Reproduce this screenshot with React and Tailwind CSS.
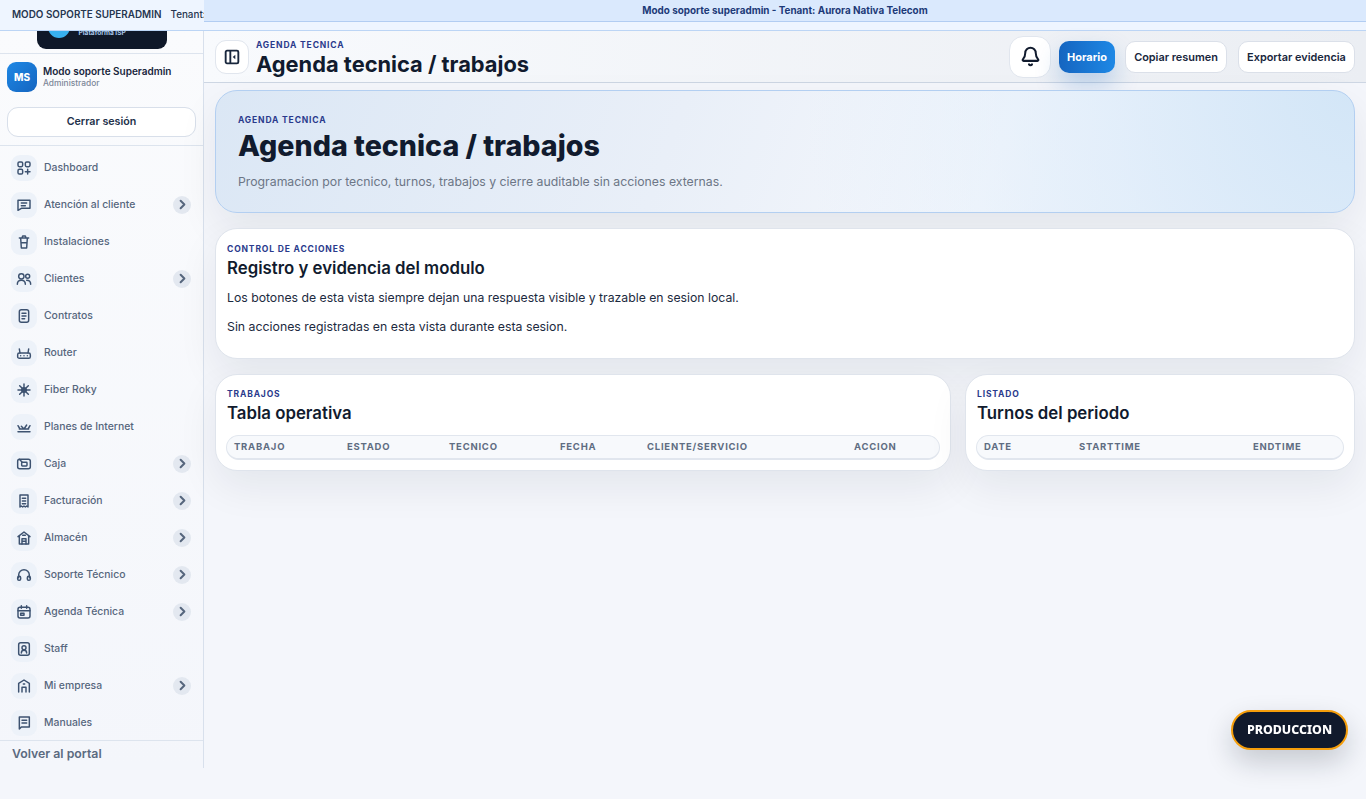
import { Bell, ChevronRight } from "lucide-react";

const Svg = ({ children }) => (
  <svg width="16" height="16" viewBox="0 0 24 24" fill="none" stroke="#3d5270" strokeWidth="2.2" strokeLinecap="round" strokeLinejoin="round">
    {children}
  </svg>
);

const icons = {
  dashboard: (
    <Svg>
      <rect x="3" y="3" width="7" height="7" rx="2" />
      <rect x="14" y="3" width="7" height="7" rx="2" />
      <rect x="3" y="14" width="7" height="7" rx="2" />
      <path d="M17.5 14v7M14 17.5h7" />
    </Svg>
  ),
  chat: (
    <Svg>
      <path d="M3 5h18v12H8l-5 3z" />
      <path d="M8 9h8M8 13h6" />
    </Svg>
  ),
  trash: (
    <Svg>
      <path d="M5 6h14M9 6l1-3h4l1 3M7 6l1 15h8l1-15M7.500 13h9" />
    </Svg>
  ),
  users: (
    <Svg>
      <circle cx="8" cy="8" r="4" />
      <circle cx="17.500" cy="8" r="3" />
      <path d="M2 20c0-4 2.500-6 6-6s6 2 6 6M16 14c3.500 0 6 2 6 6" />
    </Svg>
  ),
  contract: (
    <Svg>
      <rect x="5" y="2.500" width="14" height="19" rx="3" />
      <path d="M9 8h6M9 12h6M9 16h4" />
    </Svg>
  ),
  router: (
    <Svg>
      <rect x="2.500" y="12" width="19" height="8" rx="2.500" />
      <path d="M6 12 5 6M18 12l1-6M7 16h.01M12 16h.01M17 16h.01" />
    </Svg>
  ),
  fiber: (
    <Svg>
      <circle cx="12" cy="12" r="3.500" fill="#3d5270" />
      <path d="M12 3v5M12 16v5M3 12h5M16 12h5M5.500 5.500 9 9M15 15l3.500 3.500M18.500 5.500 15 9M9 15l-3.500 3.500" />
    </Svg>
  ),
  plans: (
    <Svg>
      <path d="M3 19h18M5 15h14M6 15 3 10M18 15l3-5M8 11l4 4 4-6" />
    </Svg>
  ),
  box: (
    <Svg>
      <rect x="2.500" y="5" width="19" height="14" rx="3" />
      <rect x="8.500" y="9.500" width="8" height="5.500" rx="1" />
      <path d="m5 5 4 4" />
    </Svg>
  ),
  bill: (
    <Svg>
      <path d="M6 3h12v18l-2-1.500-2 1.500-2-1.500-2 1.500-2-1.500L6 21z" />
      <path d="M9.500 8h5M9.500 12h5M9.500 16h5" />
    </Svg>
  ),
  warehouse: (
    <Svg>
      <path d="M3 10 12 3l9 7M5 9v12h14V9" />
      <path d="M9 21v-8h6v8M9 17h6M10 8h4" />
    </Svg>
  ),
  headset: (
    <Svg>
      <path d="M4 16v-4a8 8 0 0 1 16 0v4" />
      <rect x="2.500" y="14" width="4.500" height="6" rx="2" />
      <rect x="17" y="14" width="4.500" height="6" rx="2" />
    </Svg>
  ),
  calendar: (
    <Svg>
      <rect x="3" y="5" width="18" height="16" rx="3" />
      <path d="M8 2.500v4M16 2.500v4M3 10h18M7 14h5v3H7z" />
    </Svg>
  ),
  staff: (
    <Svg>
      <rect x="4" y="2.500" width="16" height="19" rx="3" />
      <circle cx="12" cy="10" r="3" />
      <path d="M8 18c0-3 1.500-4 4-4s4 1 4 4" />
    </Svg>
  ),
  company: (
    <Svg>
      <path d="M4 21V8l8-5 8 5v13" />
      <path d="M9 21v-7h6v7M11 9h2" />
    </Svg>
  ),
  manual: (
    <Svg>
      <path d="M5 21V3h15v15H8l-3 3" />
      <path d="M9 8h7M9 12h7" />
    </Svg>
  ),
};

const navItems = [
  { label: "Dashboard", icon: "dashboard" },
  { label: "Atención al cliente", icon: "chat", more: true },
  { label: "Instalaciones", icon: "trash" },
  { label: "Clientes", icon: "users", more: true },
  { label: "Contratos", icon: "contract" },
  { label: "Router", icon: "router" },
  { label: "Fiber Roky", icon: "fiber" },
  { label: "Planes de Internet", icon: "plans" },
  { label: "Caja", icon: "box", more: true },
  { label: "Facturación", icon: "bill", more: true },
  { label: "Almacén", icon: "warehouse", more: true },
  { label: "Soporte Técnico", icon: "headset", more: true },
  { label: "Agenda Técnica", icon: "calendar", more: true },
  { label: "Staff", icon: "staff" },
  { label: "Mi empresa", icon: "company", more: true },
  { label: "Manuales", icon: "manual" },
];

const NavRow = ({ label, icon, more }) => (
  <div className="flex h-[37px] shrink-0 items-center gap-[7px] pl-[11px] pr-3">
    <span className="flex h-[26px] w-[26px] items-center justify-center rounded-[9px] bg-[#edf2f9]">{icons[icon]}</span>
    <span className="flex-1 text-[10.4px] font-medium text-[#56667d]">{label}</span>
    {more && (
      <span className="flex h-[18px] w-[18px] items-center justify-center rounded-full bg-[#e3e8f0]">
        <ChevronRight size={15} strokeWidth={3.2} className="text-[#56667d]" />
      </span>
    )}
  </div>
);

const Sidebar = () => (
  <aside className="flex h-[737px] w-[204px] shrink-0 flex-col overflow-hidden border-r border-[#d8e0ec] bg-gradient-to-b from-[#fafbfd] to-[#f4f6fb]">
    <div className="h-[23px] shrink-0 border-b border-[#dde4ee]">
      <div className="mx-auto flex h-[18px] w-[130px] items-start overflow-hidden rounded-b-[9px] bg-[#0f1829] pl-[11px]">
        <span className="-mt-[15px] h-[22px] w-[22px] shrink-0 rounded-full bg-[#38b0ee]" />
        <span className="ml-[9px] mt-[-2px] text-[6.6px] font-bold leading-[8px] text-[#a9c9ec]">Plataforma ISP</span>
      </div>
    </div>
    <div className="flex shrink-0 items-center gap-[6px] pl-[7px] pt-[8px]">
      <span className="flex h-[30px] w-[30px] items-center justify-center rounded-[9px] bg-gradient-to-br from-[#1e88e5] to-[#1565c0] text-[10px] font-extrabold text-white">
        MS
      </span>
      <div className="flex flex-col">
        <span className="text-[10px] font-semibold leading-[13px] text-[#18263c]">Modo soporte Superadmin</span>
        <span className="text-[8.4px] font-medium leading-[11px] text-[#7c8798]">Administrador</span>
      </div>
    </div>
    <div className="shrink-0 border-b border-[#dde4ee] px-[7px] pb-[8px] pt-[15px]">
      <button className="h-[30px] w-full rounded-[11px] border border-[#d8dfea] bg-white text-[10.7px] font-semibold text-[#22314a]">
        Cerrar sesión
      </button>
    </div>
    <nav className="flex h-[595px] shrink-0 flex-col overflow-hidden border-b border-[#dde4ee] pt-[3px]">
      {navItems.map((item) => (
        <NavRow key={item.label} {...item} />
      ))}
    </nav>
    <div className="pl-3 pt-[4px] text-[12.3px] font-semibold text-[#5b6a80]">Volver al portal</div>
  </aside>
);

const Eyebrow = ({ children }) => (
  <div className="text-[8.5px] font-bold uppercase leading-[11px] tracking-[0.1em] text-[#2a3a8c]">{children}</div>
);

const TableCard = ({ eyebrow, title, className, children }) => (
  <section className={`rounded-[22px] border border-[#dfe4ec] bg-white px-[10px] pb-[10px] pt-[14px] shadow-[0_16px_40px_rgba(15,23,42,0.07)] ${className}`}>
    <div className="pl-px">
      <Eyebrow>{eyebrow}</Eyebrow>
      <h3 className="mt-[2px] text-[16.8px] font-semibold leading-[22px] text-[#111b2e]">{title}</h3>
    </div>
    <div className="mt-[11px] flex h-[25px] items-center rounded-[13px] border border-b-2 border-[#e1e6ee] bg-[#f7f9fc] text-[9.5px] font-bold tracking-[0.08em] text-[#5f6d82]">
      {children}
    </div>
  </section>
);

const HeaderCell = ({ className, children }) => <span className={`shrink-0 ${className}`}>{children}</span>;

export default function App() {
  return (
    <div className="min-h-[799px] bg-[#f4f6fb] font-['Inter','Liberation_Sans',sans-serif]">
      <div className="flex h-[31px] bg-[#eef5ff]">
        <div className="w-[204px] shrink-0 overflow-hidden whitespace-nowrap border-b border-[#bcd5f5] pl-3 pt-[8px] text-[9.9px] font-medium leading-[13px] text-[#26364f]">
          <span className="font-semibold">MODO SOPORTE SUPERADMIN</span>
          <span className="ml-[9px]">Tenant: Aurora Nativa Telecom</span>
        </div>
        <div className="flex-1 border-b border-[#bcd5f5]">
          <div className="flex h-[22px] items-center justify-center border-b border-[#b2cdf2] bg-[#dae9fd] text-[9.9px] font-bold text-[#1d3a78]">
            Modo soporte superadmin - Tenant: Aurora Nativa Telecom
          </div>
        </div>
      </div>

      <div className="flex">
        <Sidebar />
        <main className="min-w-0 flex-1">
          <header className="flex h-[52px] items-center border-b border-[#cdd6e3] bg-gradient-to-r from-[#f8fafd] to-[#ebeef3] pl-[11px] pr-[11px]">
            <button className="flex h-[34px] w-[34px] items-center justify-center rounded-[11px] border border-[#e1e6ee] bg-white">
              <svg width="16" height="16" viewBox="0 0 24 24" fill="none" stroke="#18263c" strokeWidth="2.8" strokeLinejoin="round">
                <rect x="2.500" y="2.500" width="19" height="19" rx="2" />
                <path d="M9.500 2.500v19" />
                <path d="M17 8.500v7l-4-3.500z" fill="#18263c" stroke="none" />
              </svg>
            </button>
            <div className="ml-[7px] flex-1 pt-[4px]">
              <Eyebrow>Agenda tecnica</Eyebrow>
              <h1 className="mt-px text-[21.85px] font-bold leading-[25px] text-[#111b2e]">Agenda tecnica / trabajos</h1>
            </div>
            <button className="flex h-[42px] w-[42px] items-center justify-center rounded-[14px] border border-[#e1e6ee] bg-white">
              <Bell size={21} strokeWidth={2.3} className="text-[#111b2e]" />
            </button>
            <button className="ml-[8px] h-[32px] w-[56px] rounded-[10px] bg-gradient-to-r from-[#1565c0] to-[#1e88e5] pt-px text-[11px] font-bold text-white shadow-[0_12px_24px_rgba(21,101,192,0.25)]">
              Horario
            </button>
            <button className="ml-[10px] h-[32px] w-[102px] rounded-[10px] border border-[#dbe0e9] bg-white pt-px text-[10.9px] font-semibold text-[#18263c]">
              Copiar resumen
            </button>
            <button className="ml-[11px] h-[32px] w-[117px] rounded-[10px] border border-[#dbe0e9] bg-white pt-px text-[10.9px] font-semibold text-[#18263c]">
              Exportar evidencia
            </button>
          </header>

          <div className="flex flex-col gap-[15px] px-[11px] pt-[7px]">
            <section className="h-[123px] rounded-[22px] border border-[#b3cff1] bg-[radial-gradient(circle_at_100%_0%,#d3e6f7_0%,rgba(222,236,250,0.7)_22%,rgba(240,245,252,0)_48%),linear-gradient(110deg,#dbe7f5_0%,#e9eff8_40%,#f4f7fc_68%,#e4eefa_100%)] pl-[22px] pt-[24px] shadow-[0_16px_40px_rgba(15,23,42,0.07)]">
              <Eyebrow>Agenda tecnica</Eyebrow>
              <h2 className="mt-[2px] text-[28.6px] font-extrabold leading-[36px] text-[#111b2e]">Agenda tecnica / trabajos</h2>
              <p className="mt-[10px] text-[12.27px] leading-[16px] text-[#6c7686]">
                Programacion por tecnico, turnos, trabajos y cierre auditable sin acciones externas.
              </p>
            </section>

            <section className="h-[131px] rounded-[22px] border border-[#dfe4ec] bg-white px-[11px] pt-[15px] shadow-[0_16px_40px_rgba(15,23,42,0.07)]">
              <Eyebrow>Control de acciones</Eyebrow>
              <h3 className="mt-[2px] text-[16.8px] font-semibold leading-[22px] text-[#111b2e]">Registro y evidencia del modulo</h3>
              <p className="mt-[11px] text-[12.24px] leading-[16px] text-[#1c2a40]">
                Los botones de esta vista siempre dejan una respuesta visible y trazable en sesion local.
              </p>
              <p className="mt-[13px] text-[12.3px] leading-[16px] text-[#1c2a40]">
                Sin acciones registradas en esta vista durante esta sesion.
              </p>
            </section>

            <div className="flex gap-[14px]">
              <TableCard eyebrow="Trabajos" title="Tabla operativa" className="w-[736px] shrink-0">
                <HeaderCell className="ml-[7px] w-[113px]">TRABAJO</HeaderCell>
                <HeaderCell className="w-[102px]">ESTADO</HeaderCell>
                <HeaderCell className="w-[111px]">TECNICO</HeaderCell>
                <HeaderCell className="w-[87px]">FECHA</HeaderCell>
                <HeaderCell className="w-[207px]">CLIENTE/SERVICIO</HeaderCell>
                <HeaderCell>ACCION</HeaderCell>
              </TableCard>
              <TableCard eyebrow="Listado" title="Turnos del periodo" className="min-w-0 flex-1">
                <HeaderCell className="ml-[7px] w-[95px]">DATE</HeaderCell>
                <HeaderCell className="w-[174px]">STARTTIME</HeaderCell>
                <HeaderCell>ENDTIME</HeaderCell>
              </TableCard>
            </div>
          </div>
        </main>
      </div>

      <button className="fixed bottom-[49px] right-[18px] h-[40px] w-[117px] rounded-full border-2 border-[#f59e0b] bg-[#111a2c] font-['Noto_Sans',sans-serif] text-[12.4px] font-extrabold text-white shadow-[0_12px_28px_rgba(15,23,42,0.2)]">
        PRODUCCION
      </button>
    </div>
  );
}
